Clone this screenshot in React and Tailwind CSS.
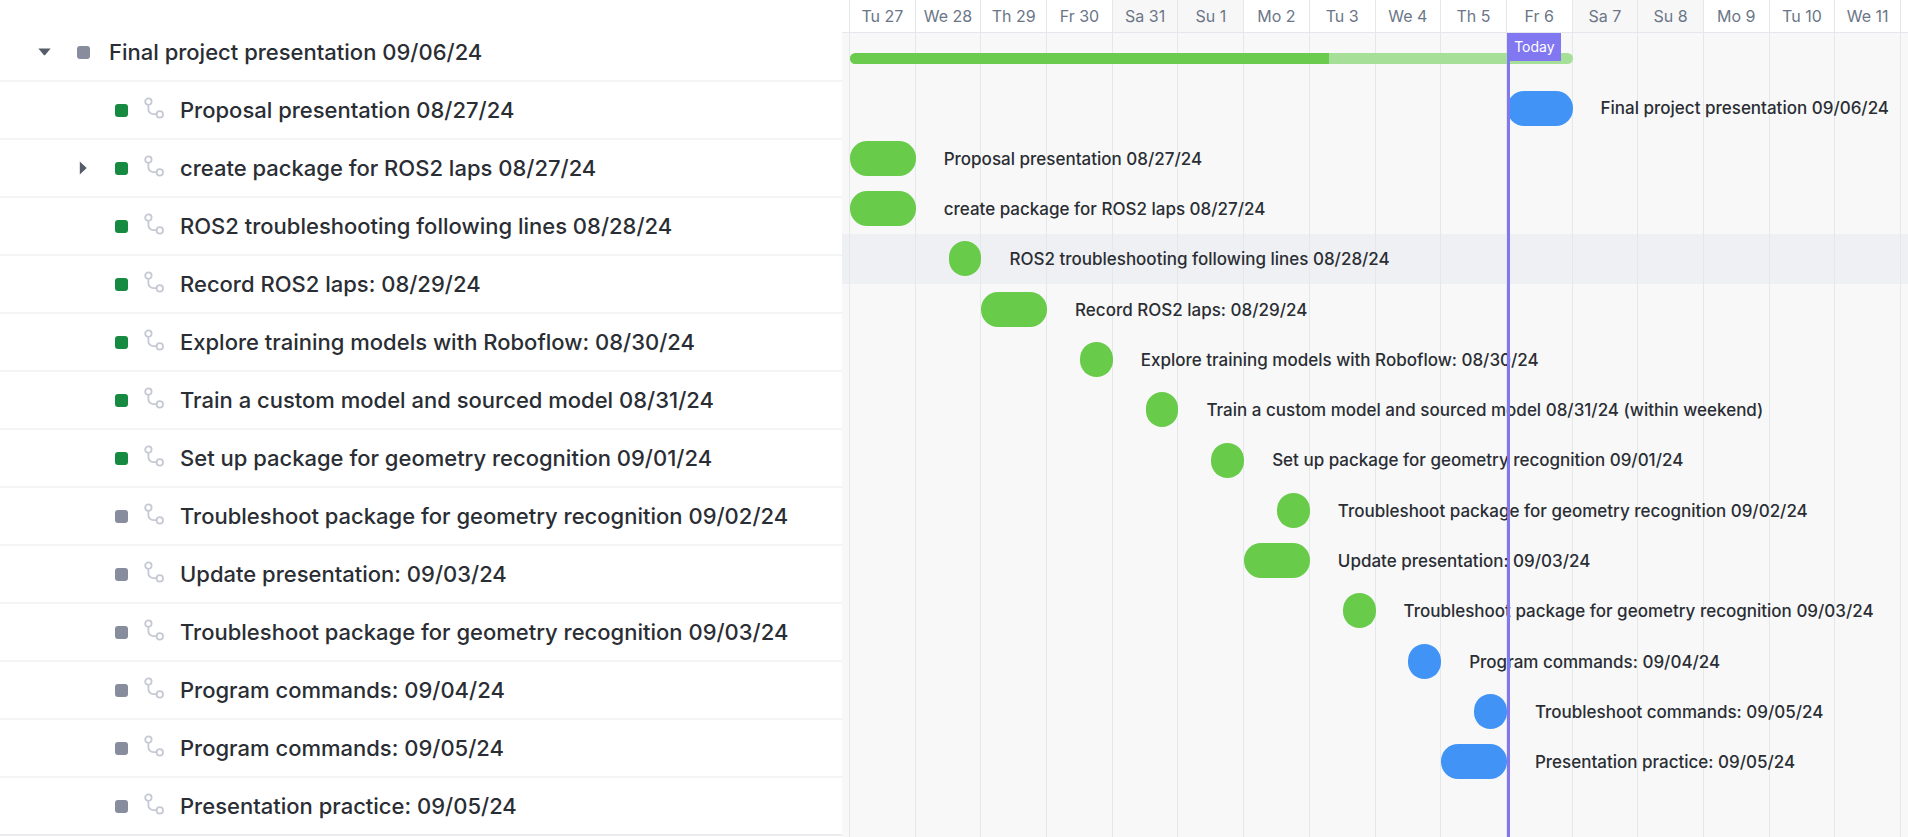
const DONE = 'bg-[#178a42]';
const OPEN = 'bg-[#878d9c]';
const GREEN = 'bg-[#69cb4a]';
const BLUE = 'bg-[#4194f6]';

const parent = { title: 'Final project presentation 09/06/24' };

const subtasks = [
  { title: 'Proposal presentation 08/27/24', done: true },
  { title: 'create package for ROS2 laps 08/27/24', done: true, nested: true },
  { title: 'ROS2 troubleshooting following lines 08/28/24', done: true },
  { title: 'Record ROS2 laps: 08/29/24', done: true },
  { title: 'Explore training models with Roboflow: 08/30/24', done: true },
  { title: 'Train a custom model and sourced model 08/31/24', done: true },
  { title: 'Set up package for geometry recognition 09/01/24', done: true },
  { title: 'Troubleshoot package for geometry recognition 09/02/24' },
  { title: 'Update presentation: 09/03/24' },
  { title: 'Troubleshoot package for geometry recognition 09/03/24' },
  { title: 'Program commands: 09/04/24' },
  { title: 'Program commands: 09/05/24' },
  { title: 'Presentation practice: 09/05/24' },
];

const days = [
  'Tu 27', 'We 28', 'Th 29', 'Fr 30', 'Sa 31', 'Su 1', 'Mo 2', 'Tu 3',
  'We 4', 'Th 5', 'Fr 6', 'Sa 7', 'Su 8', 'Mo 9', 'Tu 10', 'We 11',
];

// start and span are counted in half days from the first column
const bars = [
  { start: 20, span: 2, color: BLUE, label: 'Final project presentation 09/06/24' },
  { start: 0, span: 2, color: GREEN, label: 'Proposal presentation 08/27/24' },
  { start: 0, span: 2, color: GREEN, label: 'create package for ROS2 laps 08/27/24' },
  { start: 3, span: 1, color: GREEN, label: 'ROS2 troubleshooting following lines 08/28/24' },
  { start: 4, span: 2, color: GREEN, label: 'Record ROS2 laps: 08/29/24' },
  { start: 7, span: 1, color: GREEN, label: 'Explore training models with Roboflow: 08/30/24' },
  { start: 9, span: 1, color: GREEN, label: 'Train a custom model and sourced model 08/31/24 (within weekend)' },
  { start: 11, span: 1, color: GREEN, label: 'Set up package for geometry recognition 09/01/24' },
  { start: 13, span: 1, color: GREEN, label: 'Troubleshoot package for geometry recognition 09/02/24' },
  { start: 12, span: 2, color: GREEN, label: 'Update presentation: 09/03/24' },
  { start: 15, span: 1, color: GREEN, label: 'Troubleshoot package for geometry recognition 09/03/24' },
  { start: 17, span: 1, color: BLUE, label: 'Program commands: 09/04/24' },
  { start: 19, span: 1, color: BLUE, label: 'Troubleshoot commands: 09/05/24' },
  { start: 18, span: 2, color: BLUE, label: 'Presentation practice: 09/05/24' },
];

function SubtaskIcon() {
  return (
    <svg width="20" height="22" viewBox="0 0 20 22" fill="none" stroke="#c6c9d3" strokeWidth="1.8" className="mb-1 shrink-0" aria-hidden="true">
      <circle cx="4.4" cy="4.6" r="3.2" />
      <circle cx="15.8" cy="17.4" r="3.2" />
      <path d="M4.4 8v4.2a5 5 0 0 0 5 5h2.8" />
    </svg>
  );
}

function Status({ done }) {
  return <span className={`size-[13px] shrink-0 rounded-[3px] ${done ? DONE : OPEN}`} />;
}

function TaskList() {
  return (
    <ul className="bg-white pt-6 text-[22px] font-medium text-[#2a2e34]">
      <li className="flex h-[58px] items-center border-b-2 border-[#f3f4f5] pl-[38px]">
        <button type="button" aria-label="Collapse subtasks" aria-expanded="true" className="w-[39px]">
          <svg width="13" height="8" viewBox="0 0 13 8" fill="#565c69" aria-hidden="true">
            <path d="M0.4 0.6h12.2L7.2 7a1 1 0 0 1-1.4 0z" />
          </svg>
        </button>
        <Status />
        <a href="#final" className="ml-[19px] whitespace-nowrap">{parent.title}</a>
      </li>
      {subtasks.map((t, i) => (
        <li key={i} className="flex h-[58px] items-center border-b-2 border-[#f3f4f5] pl-[79px] last:border-[#e9ebee]">
          <span className="flex w-9 shrink-0">
            {t.nested && (
              <button type="button" aria-label="Expand subtasks" aria-expanded="false">
                <svg width="8" height="14" viewBox="0 0 8 14" fill="#565c69" aria-hidden="true">
                  <path d="M0.8 0.6v12.8L7.2 7.6a0.8 0.8 0 0 0 0-1.2z" />
                </svg>
              </button>
            )}
          </span>
          <Status done={t.done} />
          <span className="mr-4 ml-4 flex"><SubtaskIcon /></span>
          <a href={`#task-${i}`} className="whitespace-nowrap">{t.title}</a>
        </li>
      ))}
    </ul>
  );
}

function DayHeader() {
  return (
    <div className="flex h-[33px] border-b border-[#e6e7ec] bg-white pr-[7px] text-[16px] text-[#6b7687]">
      <span className="w-2 shrink-0 border-r border-[#e6e7ec]" />
      {days.map((d) => (
        <div key={d} className={`flex min-w-0 flex-1 items-center justify-center border-r border-[#e6e7ec] ${/^S/.test(d) ? 'bg-[#f7f7f8]' : ''}`}>
          {d}
        </div>
      ))}
    </div>
  );
}

function GridLines() {
  return (
    <div className="absolute inset-0 flex pr-[7px]" aria-hidden="true">
      <span className="w-2 shrink-0 border-r border-[#e5e8e9]" />
      {days.map((d) => <span key={d} className="flex-1 border-r border-[#e5e8e9]" />)}
    </div>
  );
}

function Timeline() {
  return (
    <section className="flex min-w-0 flex-col bg-[#f8f8f8]">
      <DayHeader />
      <div className="relative grow">
        <div className="absolute inset-x-0 top-[201px] h-[50px] bg-[#eff0f3]" />
        <GridLines />
        <div className="relative grid h-[50px] grid-cols-[repeat(32,minmax(0,1fr))] pt-5 pr-[7px] pl-2">
          <div className="flex h-[11px] overflow-hidden rounded-full bg-[#a6df97]" style={{ gridColumn: '1 / span 22' }}>
            <span className="bg-[#6bcb4f]" style={{ width: '66.3%' }} />
          </div>
        </div>
        <ul className="relative grid h-[704px] grid-rows-[repeat(14,minmax(0,1fr))] text-[17px] font-medium text-[#2a2e34]">
          {bars.map((b, i) => (
            <li key={i} className="grid grid-cols-[repeat(32,minmax(0,1fr))] items-center pr-[7px] pl-2">
              <span className={`h-[35px] rounded-[17px] ${b.color}`} style={{ gridColumn: `${b.start + 1} / span ${b.span}` }} />
              <span className="pt-0.5 pl-7 whitespace-nowrap" style={{ gridColumn: `${b.start + b.span + 1} / -1` }}>{b.label}</span>
            </li>
          ))}
        </ul>
        <div className="pointer-events-none absolute inset-0 grid grid-cols-[repeat(16,minmax(0,1fr))] pr-[7px] pl-2">
          <div className="col-start-11 border-l-3 border-[#8077f1]">
            <span className="flex h-7 w-[51px] items-center justify-center bg-[#8077f1] pr-0.5 pb-0.5 text-[14px] text-white">Today</span>
          </div>
        </div>
      </div>
    </section>
  );
}

export default function App() {
  return (
    <main className="grid min-h-screen grid-cols-[minmax(0,842fr)_minmax(0,1066fr)] overflow-hidden bg-white font-['Inter','Liberation_Sans',sans-serif]">
      <TaskList />
      <Timeline />
    </main>
  );
}
